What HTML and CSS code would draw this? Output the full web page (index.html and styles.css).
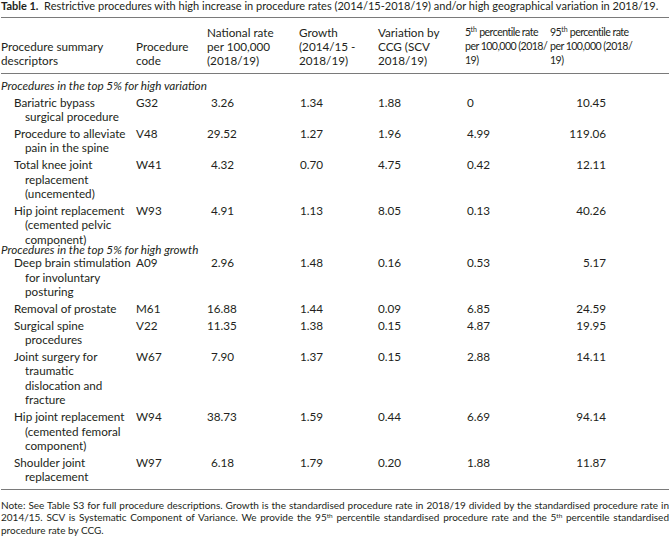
FILE: index.html
```html
<!DOCTYPE html>
<html lang="en">
<head>
<meta charset="utf-8">
<title>Table 1</title>
<link rel="stylesheet" href="styles.css">
</head>
<body>
<div class="page">
  <p class="caption"><b>Table 1.</b>&nbsp; Restrictive procedures with high increase in procedure rates (2014/15-2018/19) and/or high geographical variation in 2018/19.</p>
  <table class="data">
    <colgroup>
      <col class="c1"><col class="c2"><col class="c3"><col class="c4"><col class="c5"><col class="c6"><col class="c7">
    </colgroup>
    <thead>
      <tr>
        <th>Procedure summary<br>descriptors</th>
        <th>Procedure<br>code</th>
        <th>National rate<br>per 100,000<br>(2018/19)</th>
        <th>Growth<br>(2014/15 -<br>2018/19)</th>
        <th>Variation by<br>CCG (SCV<br>2018/19)</th>
        <th class="pct">5<sup>th</sup> percentile rate<br>per 100,000 (2018/<br>19)</th>
        <th class="pct">95<sup>th</sup> percentile rate<br>per 100,000 (2018/<br>19)</th>
      </tr>
    </thead>
    <tbody>
      <tr class="section first"><td colspan="7"><span>Procedures in the top 5% for high variation</span></td></tr>
      <tr><td class="desc">Bariatric bypass<br>surgical procedure</td><td class="code">G32</td><td class="nat">3.26</td><td class="gro">1.34</td><td class="var">1.88</td><td class="p5">0</td><td class="p95">10.45</td></tr>
      <tr><td class="desc">Procedure to alleviate<br>pain in the spine</td><td class="code">V48</td><td class="nat">29.52</td><td class="gro">1.27</td><td class="var">1.96</td><td class="p5">4.99</td><td class="p95">119.06</td></tr>
      <tr><td class="desc">Total knee joint<br>replacement<br>(uncemented)</td><td class="code">W41</td><td class="nat">4.32</td><td class="gro">0.70</td><td class="var">4.75</td><td class="p5">0.42</td><td class="p95">12.11</td></tr>
      <tr><td class="desc">Hip joint replacement<br>(cemented pelvic<br>component)</td><td class="code">W93</td><td class="nat">4.91</td><td class="gro">1.13</td><td class="var">8.05</td><td class="p5">0.13</td><td class="p95">40.26</td></tr>
      <tr class="section tight"><td colspan="7"><span>Procedures in the top 5% for high growth</span></td></tr>
      <tr><td class="desc">Deep brain stimulation<br>for involuntary<br>posturing</td><td class="code">A09</td><td class="nat">2.96</td><td class="gro">1.48</td><td class="var">0.16</td><td class="p5">0.53</td><td class="p95">5.17</td></tr>
      <tr><td class="desc">Removal of prostate</td><td class="code">M61</td><td class="nat">16.88</td><td class="gro">1.44</td><td class="var">0.09</td><td class="p5">6.85</td><td class="p95">24.59</td></tr>
      <tr><td class="desc">Surgical spine<br>procedures</td><td class="code">V22</td><td class="nat">11.35</td><td class="gro">1.38</td><td class="var">0.15</td><td class="p5">4.87</td><td class="p95">19.95</td></tr>
      <tr><td class="desc">Joint surgery for<br>traumatic<br>dislocation and<br>fracture</td><td class="code">W67</td><td class="nat">7.90</td><td class="gro">1.37</td><td class="var">0.15</td><td class="p5">2.88</td><td class="p95">14.11</td></tr>
      <tr><td class="desc">Hip joint replacement<br>(cemented femoral<br>component)</td><td class="code">W94</td><td class="nat">38.73</td><td class="gro">1.59</td><td class="var">0.44</td><td class="p5">6.69</td><td class="p95">94.14</td></tr>
      <tr class="last"><td class="desc">Shoulder joint<br>replacement</td><td class="code">W97</td><td class="nat">6.18</td><td class="gro">1.79</td><td class="var">0.20</td><td class="p5">1.88</td><td class="p95">11.87</td></tr>
    </tbody>
  </table>
  <p class="note">Note: See Table S3 for full procedure descriptions. Growth is the standardised procedure rate in 2018/19 divided by the standardised procedure rate in 2014/15. SCV is Systematic Component of Variance. We provide the 95<sup>th</sup> percentile standardised procedure rate and the 5<sup>th</sup> percentile standardised procedure rate by CCG.</p>
</div>
</body>
</html>
```
FILE: styles.css
```css
html, body {
  margin: 0;
  padding: 0;
  background: #ffffff;
}
body {
  font-family: Lato, "Open Sans", sans-serif;
  color: #231f20;
  font-size: 11px;
}
.page {
  padding-left: 1px;
  width: 668px;
  overflow: hidden;
}
.caption {
  margin: -1px 0 5px 0;
  line-height: 13px;
  white-space: nowrap;
}
.caption b {
  font-weight: 700;
}
.data {
  border-collapse: collapse;
  width: 668px;
  table-layout: fixed;
  border-top: 1px solid #7a7a7a;
  border-bottom: 1px solid #7a7a7a;
  font-size: 11.7px;
}
.c1 { width: 135px; }
.c2 { width: 71px; }
.c3 { width: 92px; }
.c4 { width: 79px; }
.c5 { width: 87px; }
.c6 { width: 85px; }
.c7 { width: 119px; }
th, td {
  padding: 1px 0;
  line-height: 14.6px;
  vertical-align: top;
  text-align: left;
  font-weight: 400;
}
thead th {
  vertical-align: bottom;
  line-height: 14px;
  padding-top: 6.5px;
  padding-bottom: 6px;
  border-bottom: 1px solid #7a7a7a;
  white-space: nowrap;
}
thead th.pct {
  font-size: 10.6px;
  letter-spacing: -0.55px;
}
sup {
  font-size: 7px;
  line-height: 1;
  vertical-align: baseline;
  position: relative;
  top: -4px;
  letter-spacing: 0;
}
.section td {
  font-style: italic;
  padding: 0;
}
.section span {
  display: block;
}
.section.first td {
  padding-top: 4.5px;
  padding-bottom: 1px;
}
.section.tight span {
  margin-top: -6px;
  margin-bottom: -2px;
}
.desc {
  padding-left: 24px;
  text-indent: -11px;
}
.nat { text-align: right; padding-right: 65px; }
.gro { padding-left: 1px; }
.p5 { padding-left: 2px; }
.p95 { text-align: right; padding-right: 63px; }
.last td { padding-bottom: 4.5px; }
.note {
  margin: 9px 0 0 0;
  font-size: 10px;
  line-height: 12.5px;
  text-align: justify;
}
.note sup {
  font-size: 6.5px;
  top: -3px;
}
```
